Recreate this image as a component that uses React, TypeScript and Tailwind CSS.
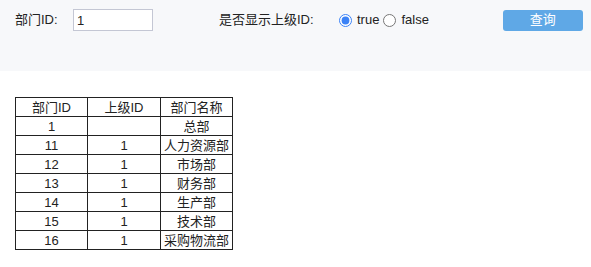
import { useState } from "react";

const rows = [
  { id: "1", parent: "", name: "总部" },
  { id: "11", parent: "1", name: "人力资源部" },
  { id: "12", parent: "1", name: "市场部" },
  { id: "13", parent: "1", name: "财务部" },
  { id: "14", parent: "1", name: "生产部" },
  { id: "15", parent: "1", name: "技术部" },
  { id: "16", parent: "1", name: "采购物流部" },
];

export default function App() {
  const [deptId, setDeptId] = useState("1");
  const [showParent, setShowParent] = useState(true);

  return (
    <div className="min-h-screen bg-white text-[13px] text-[#222] [font-family:'Liberation_Sans','Noto_Sans_CJK_SC',sans-serif]">
      <div className="h-[71px] bg-[#f7f8fa] pt-[9px]">
        <div className="flex items-center h-[22px]">
          <span className="ml-[15px] w-[58px]">部门ID:</span>
          <input
            value={deptId}
            onChange={(e) => setDeptId(e.target.value)}
            className="w-[80px] h-[22px] border border-[#c4c7d4] bg-white px-[3px] text-[13px] outline-none"
          />
          <span className="ml-[66px] w-[120px]">是否显示上级ID:</span>
          <label className="flex items-center">
            <input
              type="radio"
              checked={showParent}
              onChange={() => setShowParent(true)}
              className="w-[13px] h-[13px] m-0 accent-[#3b82f6]"
            />
            <span className="ml-[5px]">true</span>
          </label>
          <label className="flex items-center ml-[4px]">
            <input
              type="radio"
              checked={!showParent}
              onChange={() => setShowParent(false)}
              className="w-[13px] h-[13px] m-0 accent-[#3b82f6]"
            />
            <span className="ml-[5px]">false</span>
          </label>
          <button className="ml-[74px] w-[80px] h-[21px] rounded-[3px] bg-[#5fa8e6] text-white text-[13px]">
            查询
          </button>
        </div>
      </div>

      <table className="ml-[15px] mt-[26px] border-collapse text-center leading-[17px]">
        <thead>
          <tr>
            <th className="w-[72px] h-[19px] border border-[#222] font-normal p-0">部门ID</th>
            <th className="w-[73px] h-[19px] border border-[#222] font-normal p-0">上级ID</th>
            <th className="w-[72px] h-[19px] border border-[#222] font-normal p-0">部门名称</th>
          </tr>
        </thead>
        <tbody>
          {rows.map((r) => (
            <tr key={r.id}>
              <td className="h-[19px] border border-[#222] p-0">{r.id}</td>
              <td className="h-[19px] border border-[#222] p-0">{showParent ? r.parent : ""}</td>
              <td className="h-[19px] border border-[#222] p-0">{r.name}</td>
            </tr>
          ))}
        </tbody>
      </table>
    </div>
  );
}
